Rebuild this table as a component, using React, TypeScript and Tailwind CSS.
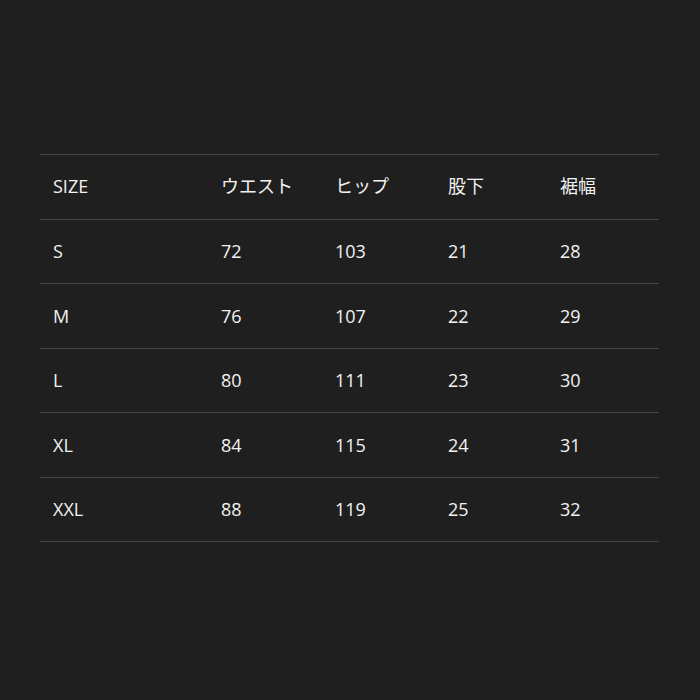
const headers = ['SIZE', 'ウエスト', 'ヒップ', '股下', '裾幅']

const rows = [
  ['S', '72', '103', '21', '28'],
  ['M', '76', '107', '22', '29'],
  ['L', '80', '111', '23', '30'],
  ['XL', '84', '115', '24', '31'],
  ['XXL', '88', '119', '25', '32'],
]

const gridCols = 'grid grid-cols-[168px_114px_113px_112px_112px]'

export default function App() {
  return (
    <div
      className="w-[700px] h-[700px] bg-[#1f1f1f] pt-[154px] px-10 text-[18px] text-[#f2f2f2]"
      style={{ fontFamily: '"Open Sans", "Noto Sans CJK JP", sans-serif' }}
    >
      <div className="w-[619px] border-t border-[#444444]">
        <div className={`${gridCols} h-[65px] items-center border-b border-[#444444]`}>
          {headers.map((h) => (
            <div key={h} className="pl-[13px] pb-[1px]">
              {h}
            </div>
          ))}
        </div>
        {rows.map((r, i) => (
          <div
            key={r[0]}
            className={`${gridCols} items-center border-b border-[#444444] ${i % 2 === 0 ? 'h-[64px]' : 'h-[65px]'}`}
          >
            {r.map((c, j) => (
              <div key={j} className="pl-[13px]">
                {c}
              </div>
            ))}
          </div>
        ))}
      </div>
    </div>
  )
}
